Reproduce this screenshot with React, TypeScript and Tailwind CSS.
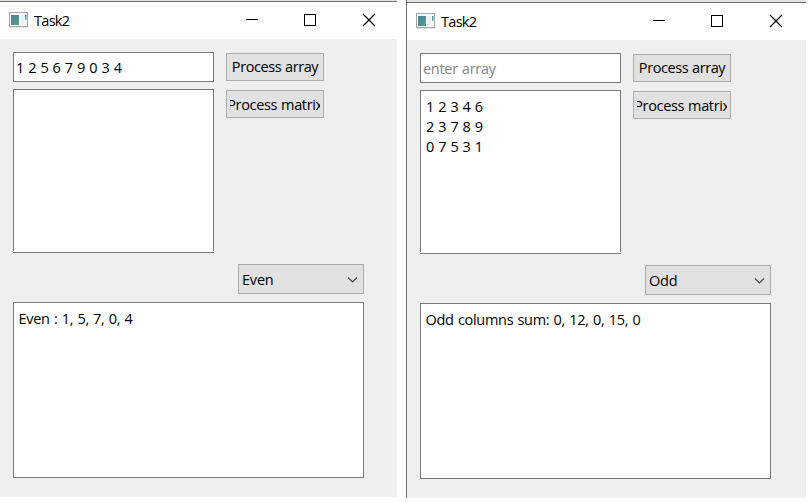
import React from 'react';

type Props = {
  array?: string;
  matrix?: string[];
  mode: string;
  result: string;
  className: string;
  topStrip: string;
  captionButtons: string;
};

function AppIcon() {
  return (
    <svg width="20" height="16" viewBox="0 0 20 16" className="block shrink-0">
      <defs>
        <linearGradient id="pane" x1="0" y1="0" x2="1" y2="1">
          <stop offset="0" stopColor="#4c7fa6" />
          <stop offset="1" stopColor="#4fa57b" />
        </linearGradient>
        <linearGradient id="bar" x1="0" y1="0" x2="0" y2="1">
          <stop offset="0" stopColor="#4c7fa6" />
          <stop offset="1" stopColor="#6db59a" />
        </linearGradient>
      </defs>
      <rect x="0.5" y="0.5" width="18" height="14" fill="#f8f9fa" stroke="#a3a8ad" />
      <rect x="1" y="15" width="18" height="1" fill="#e4e4e4" />
      <rect x="2" y="3" width="8" height="10" fill="url(#pane)" />
      <rect x="11" y="3" width="4" height="10" fill="#eef0f2" />
      <rect x="16" y="3" width="1.5" height="5" fill="url(#bar)" />
    </svg>
  );
}

function TitleBar({ captionButtons }: { captionButtons: string }) {
  return (
    <div className="flex h-[37px] shrink-0 items-start bg-white pl-[9px]">
      <div className="pt-[10px]">
        <AppIcon />
      </div>
      <div className="ml-[5px] pt-[9px] tracking-[-0.7px]">Task2</div>
      <svg width="132" height="14" viewBox="0 0 132 14" className={captionButtons} fill="none" stroke="#000" shapeRendering="crispEdges">
        <path d="M1 6.5H13" />
        <rect x="59.5" y="1.5" width="11" height="11" />
        <path d="M118 1L130 13M130 1L118 13" shapeRendering="auto" strokeWidth="1.15" />
      </svg>
    </div>
  );
}

function Window({ array, matrix, mode, result, className, topStrip, captionButtons }: Props) {
  return (
    <div className={className}>
      <div className={topStrip} />
      <TitleBar captionButtons={captionButtons} />
      <div className="flex h-[458px] flex-col bg-[#efefef] pl-[13px] pt-[13px]">
        <div className="flex gap-[12px]">
          <div className="flex w-[201px] flex-col gap-[7px]">
            <div className="flex h-[30px] items-center border border-[#7a7a7a] bg-white pl-[2px] pt-[2px]">
              {array ? (
                <span className="tracking-[-0.2px] [word-spacing:0.55px]">{array}</span>
              ) : (
                <span className="tracking-[-0.28px] text-[#868686] [word-spacing:0.5px]">enter array</span>
              )}
            </div>
            <div className="flex h-[164px] flex-col border-b border-[#7a7a7a]">
              <div className="h-[162px] border-x border-t border-[#7a7a7a] bg-white pl-[5px] pt-[6px] tracking-[-0.2px] [word-spacing:0.55px]">
                {matrix?.map((row) => (
                  <div key={row}>{row}</div>
                ))}
              </div>
              <div className="h-px bg-white" />
            </div>
          </div>
          <div className="flex flex-col gap-[9px] pt-px">
            <button className="flex h-[28px] w-[98px] items-center justify-center border border-[#adadad] bg-[#e1e1e1] px-[3px]">
              <span className="whitespace-nowrap tracking-[-0.43px] [word-spacing:0.6px]">Process array</span>
            </button>
            <button className="flex h-[28px] w-[98px] items-center border border-[#adadad] bg-[#e1e1e1] px-[3px] pt-px">
              <span className="flex w-full justify-center overflow-hidden whitespace-nowrap tracking-[-0.35px] [word-spacing:0.6px]">Process matrix</span>
            </button>
          </div>
        </div>
        <div className="ml-[225px] mt-[11px] flex h-[30px] w-[126px] items-center justify-between border border-[#adadad] bg-[#e1e1e1] pl-[3px] pr-[5px]">
          <span className="pt-[2px] tracking-[-0.2px]">{mode}</span>
          <svg width="11" height="8" viewBox="0 0 11 8" fill="none" stroke="#444" strokeWidth="1.1" className="mt-px">
            <path d="M1 1.5L5.5 6L10 1.5" />
          </svg>
        </div>
        <div className="mt-[8px] h-[176px] w-[351px] border border-[#7a7a7a] bg-white pl-[4.5px] pt-[6px]">
          <span className="tracking-[-0.3px] [word-spacing:0.8px]">{result}</span>
        </div>
      </div>
    </div>
  );
}

export default function App() {
  return (
    <div className="flex h-[503px] w-[811px] items-start gap-[9px] overflow-hidden bg-white font-['Open_Sans',sans-serif] text-[14.5px] leading-[20px] text-black">
      <Window
        array="1 2 5 6 7 9 0 3 4"
        mode="Even"
        result="Even : 1, 5, 7, 0, 4"
        className="w-[397px]"
        topStrip="h-[2px] border-b border-[#6e6e6e] bg-[#e3e3e3]"
        captionButtons="mt-[11px] ml-auto mr-[20px] block"
      />
      <Window
        matrix={['1 2 3 4 6', '2 3 7 8 9', '0 7 5 3 1']}
        mode="Odd"
        result="Odd columns sum: 0, 12, 0, 15, 0"
        className="w-[400px] border-l border-[#6e6e6e]"
        topStrip="h-[3px] border-b border-[#6e6e6e] bg-[#e3e3e3]"
        captionButtons="mt-[11px] ml-auto mr-[22px] block"
      />
    </div>
  );
}
